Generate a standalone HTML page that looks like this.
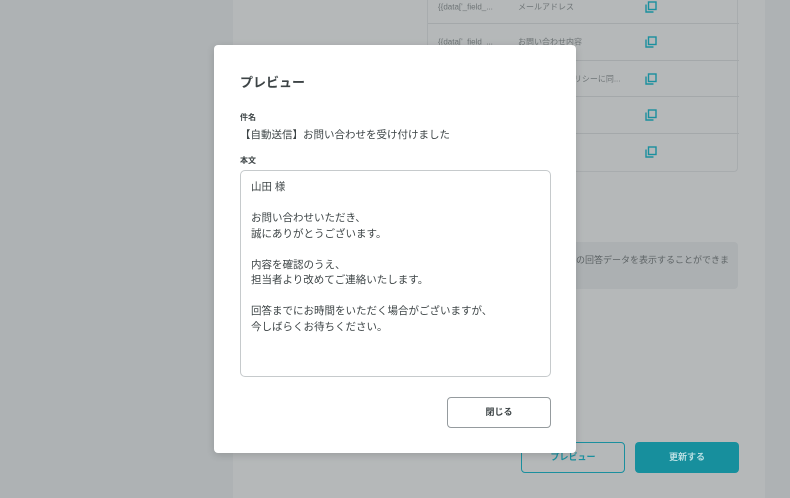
<!DOCTYPE html>
<html><head><meta charset="utf-8"><style>
*{box-sizing:border-box;margin:0;padding:0}
body{width:790px;height:498px;overflow:hidden;background:#aeb2b4;font-family:"Liberation Sans","Noto Sans CJK JP",sans-serif;position:relative}
.main{position:absolute;left:233px;top:0;width:532px;height:498px;background:#b5b8b9}
.tbl{position:absolute;left:427px;top:-10px;width:311px;height:182px;border:1px solid #a8acae;border-top:none;border-radius:0 0 4px 4px}
.row{position:absolute;left:0;width:311px;border-bottom:1px solid #a4a8aa;font-size:8px;color:#6e7476}
.row span{position:absolute;top:50%;transform:translateY(-50%)}
.ic{position:absolute;left:217px;top:50%;margin-top:-6px;width:12px;height:12px}
.info{position:absolute;left:548px;top:242px;width:190px;height:47px;background:#acb0b2;border-radius:4px}
.info span{position:absolute;left:28px;top:11px;font-size:9px;color:#5d6365;white-space:nowrap}
.btn{position:absolute;top:442px;width:104px;height:31px;border-radius:4px;font-size:9px;font-weight:bold;text-align:center;line-height:31px}
.modal{position:absolute;left:214px;top:45px;width:362px;height:408px;background:#fff;border-radius:4px;box-shadow:0 2px 8px rgba(0,0,0,.15)}
.t{position:absolute;left:26px;top:27px;font-size:13px;font-weight:bold;color:#3d4446}
.lb{position:absolute;left:26px;font-size:8px;font-weight:bold;color:#3d4446}
.sub{position:absolute;left:26px;top:82px;font-size:10.5px;color:#3d4446}
.box{position:absolute;left:26px;top:125px;width:311px;height:207px;border:1px solid #c6cacc;border-radius:5px;padding:9px 10px;font-size:10.5px;line-height:15.5px;color:#3d4446}
.close{position:absolute;left:233px;top:352px;width:104px;height:31px;border:1px solid #959b9e;border-radius:4px;text-align:center;line-height:29px;font-size:9px;font-weight:bold;color:#3d4446}
</style></head><body>
<div class="main"></div>
<div class="tbl">
<div class="row" style="top:0;height:34px"><span style="left:10px">{{data['_field_...</span><span style="left:90px">メールアドレス</span><svg class="ic" viewBox="0 0 12 12"><rect x="3.5" y="1" width="7.5" height="7.5" fill="none" stroke="#1a8f9e" stroke-width="1.4"/><path d="M1 3.5V11h7.5" fill="none" stroke="#1a8f9e" stroke-width="1.4"/></svg></div>
<div class="row" style="top:34px;height:37px"><span style="left:10px">{{data['_field_...</span><span style="left:90px">お問い合わせ内容</span><svg class="ic" viewBox="0 0 12 12"><rect x="3.5" y="1" width="7.5" height="7.5" fill="none" stroke="#1a8f9e" stroke-width="1.4"/><path d="M1 3.5V11h7.5" fill="none" stroke="#1a8f9e" stroke-width="1.4"/></svg></div>
<div class="row" style="top:71px;height:36px"><span style="left:90px">プライバシーポリシーに同...</span><svg class="ic" viewBox="0 0 12 12"><rect x="3.5" y="1" width="7.5" height="7.5" fill="none" stroke="#1a8f9e" stroke-width="1.4"/><path d="M1 3.5V11h7.5" fill="none" stroke="#1a8f9e" stroke-width="1.4"/></svg></div>
<div class="row" style="top:107px;height:37px"><svg class="ic" viewBox="0 0 12 12"><rect x="3.5" y="1" width="7.5" height="7.5" fill="none" stroke="#1a8f9e" stroke-width="1.4"/><path d="M1 3.5V11h7.5" fill="none" stroke="#1a8f9e" stroke-width="1.4"/></svg></div>
<div class="row" style="top:144px;height:36px;border-bottom:none"><svg class="ic" viewBox="0 0 12 12"><rect x="3.5" y="1" width="7.5" height="7.5" fill="none" stroke="#1a8f9e" stroke-width="1.4"/><path d="M1 3.5V11h7.5" fill="none" stroke="#1a8f9e" stroke-width="1.4"/></svg></div>
</div>
<div class="info"><span>の回答データを表示することができま</span></div>
<div class="btn" style="left:521px;border:1px solid #1a8f9e;color:#1a8f9e;line-height:29px">プレビュー</div>
<div class="btn" style="left:635px;background:#178f9d;color:#b9dfe3">更新する</div>
<div class="modal">
<div class="t">プレビュー</div>
<div class="lb" style="top:67px">件名</div>
<div class="sub">【自動送信】お問い合わせを受け付けました</div>
<div class="lb" style="top:110px">本文</div>
<div class="box">山田 様<br><br>お問い合わせいただき、<br>誠にありがとうございます。<br><br>内容を確認のうえ、<br>担当者より改めてご連絡いたします。<br><br>回答までにお時間をいただく場合がございますが、<br>今しばらくお待ちください。</div>
<div class="close">閉じる</div>
</div>
</body></html>
